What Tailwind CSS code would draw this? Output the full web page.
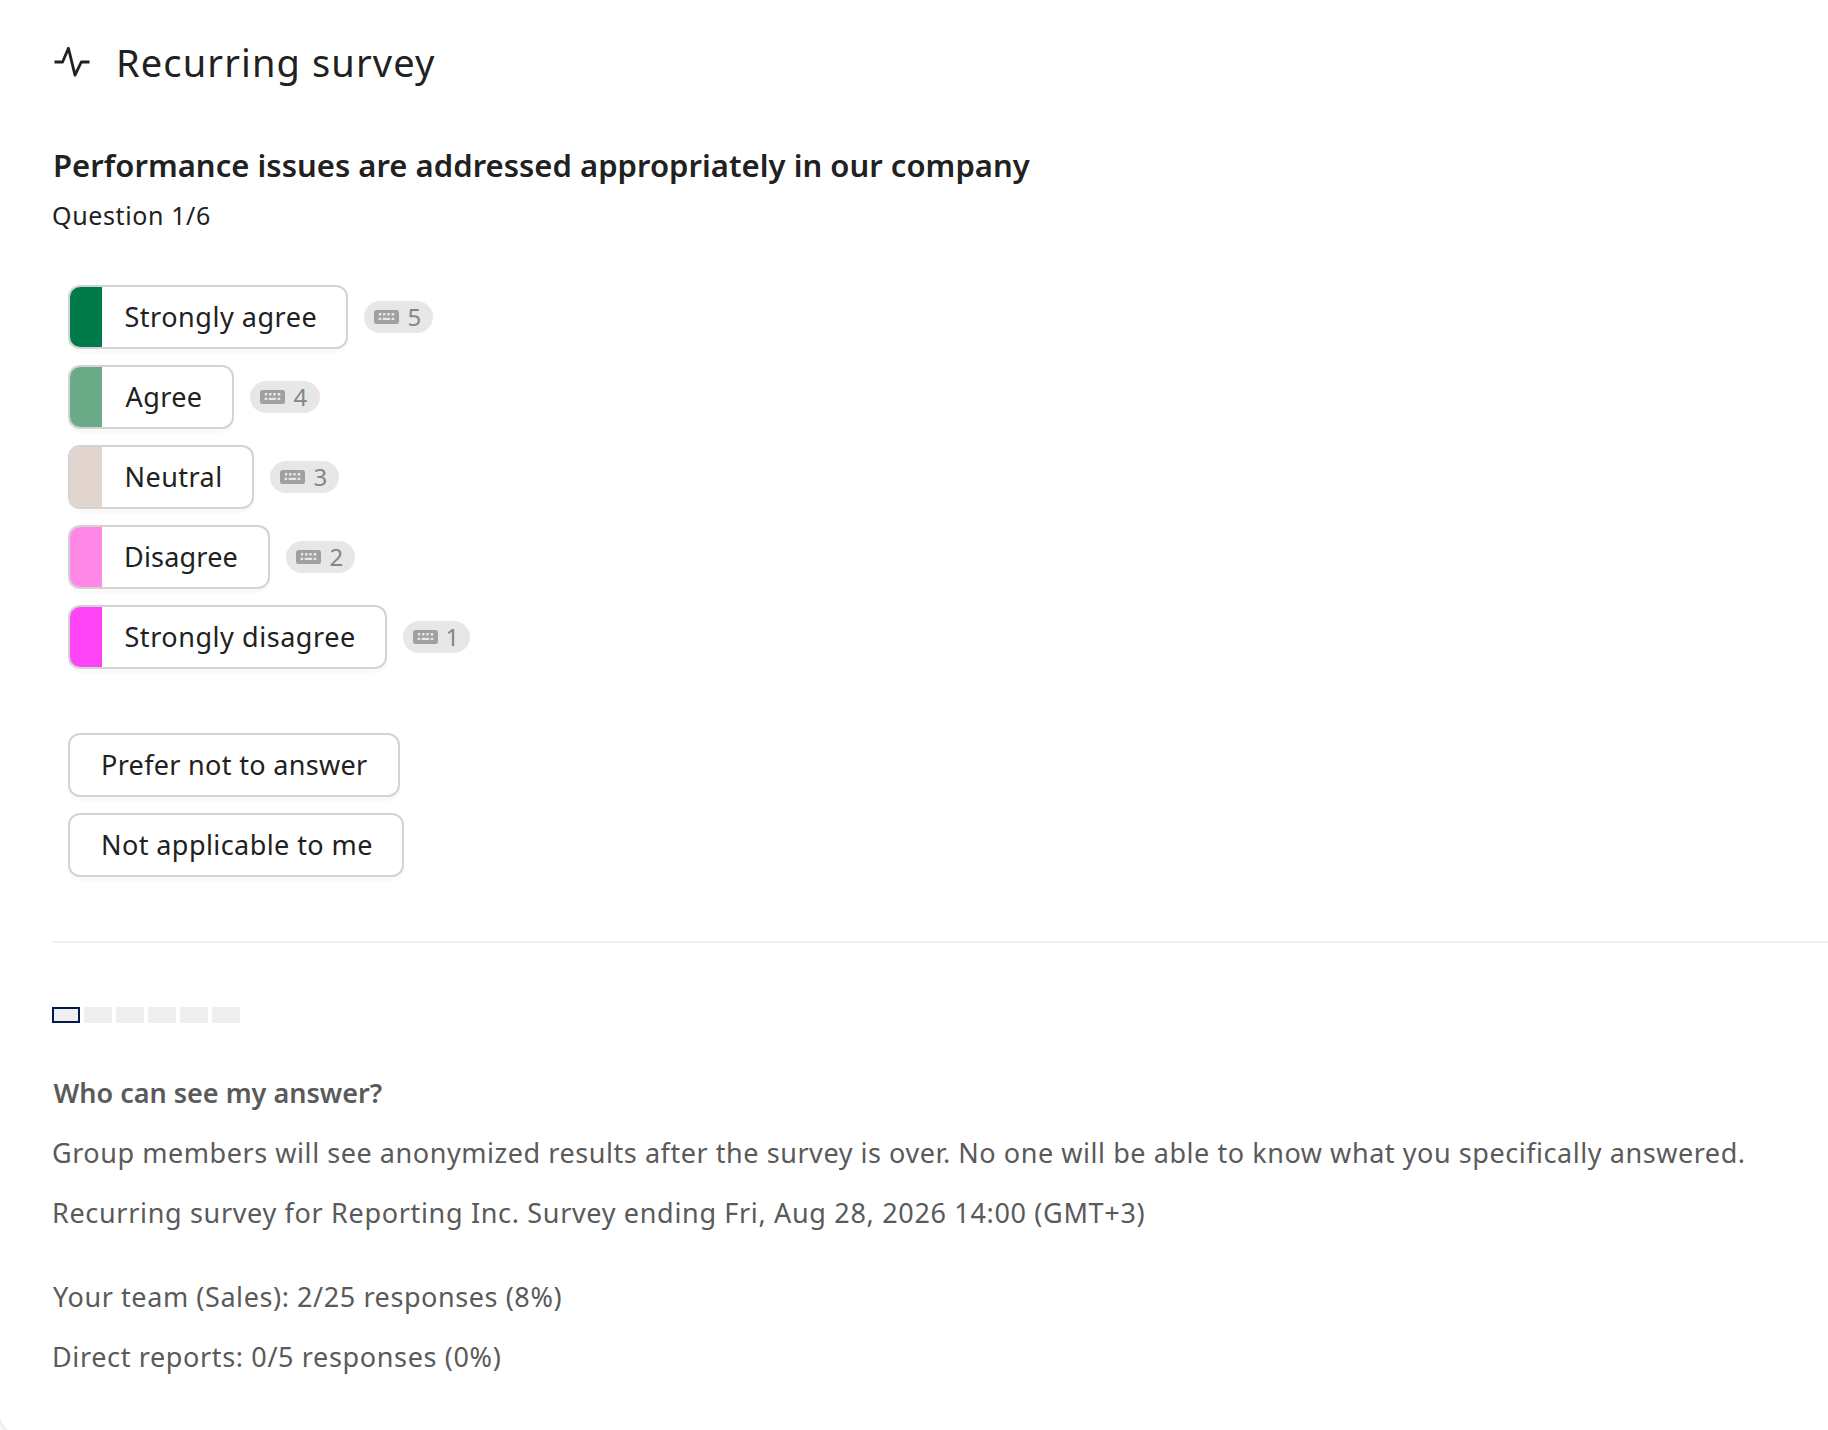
<!DOCTYPE html>
<html lang="en">
<head>
  <meta charset="UTF-8" />
  <meta name="viewport" content="width=device-width, initial-scale=1.0"/>
  <title>Recurring survey</title>
  <script src="https://cdn.jsdelivr.net/npm/@tailwindcss/browser@4"></script>
</head>

<body class="bg-[#faf7f5] text-[#212121] font-['Noto_Sans','Open_Sans',sans-serif] h-[1430px] overflow-hidden">

  <!-- keyboard icon, shared by all shortcut pills -->
  <svg class="hidden">
    <symbol id="keyboard" viewBox="0 0 25 14">
      <rect width="25" height="14" rx="2.5" fill="#a0a0a0"/>
      <path fill="#e7e7e7" d="M5 3h2.5l-.4 2.4H4.6zM9.2 3h2.5l-.4 2.4H8.8zM13.4 3h2.5l-.4 2.4H13zM17.8 3h2.5v2.4h-2.9zM4.6 7.8h2.6v2.3H4.6zM8.6 7.8h7.6v2.3H8.6zM17.6 7.8h2.7v2.3h-2.7z"/>
    </symbol>
  </svg>

  <main class="bg-white h-[1440px] -ml-1 pl-[54px] pt-[37px] border-l-2 border-b-2 border-[#ececec] rounded-bl-[32px]">

    <!-- HEADER -->
    <header class="flex items-center h-12">
      <svg class="ml-0.5 mt-px w-9 h-8" viewBox="0 0 36 32" fill="none" stroke="#212121" stroke-width="2.8" stroke-linejoin="round">
        <path d="M.5 16h8.1L14.4 2.2 21 29.2 27.3 16H35.5"/>
      </svg>
      <h1 class="ml-[26px] mt-px text-[38px] leading-12 tracking-[1.13px]">Recurring survey</h1>
    </header>

    <!-- QUESTION -->
    <h2 class="mt-15 ml-px text-[31px] leading-10 font-semibold tracking-[0.03px]">Performance issues are addressed appropriately in our company</h2>
    <p class="mt-3.5 text-[25px] leading-8 tracking-[0.62px]">Question 1/6</p>

    <!-- ANSWERS -->
    <div class="mt-[54px] ml-4 flex flex-col gap-4 text-[27px]">
      <div class="flex items-center gap-4">
        <button class="flex items-center w-[280px] h-16 border-2 border-[#d3d3d3] rounded-xl overflow-hidden shadow-[0_4px_0_rgba(0,0,0,0.02)]">
          <span class="w-8 h-full bg-[#007a4a]"></span>
          <span class="ml-[22.5px] tracking-[0.52px] whitespace-nowrap">Strongly agree</span>
        </button>
        <span class="flex items-center w-[69px] h-8 pl-[9.5px] rounded-full bg-[#e7e7e7] text-2xl text-[#858585]">
          <svg class="w-[25px] h-3.5"><use href="#keyboard"/></svg><span class="ml-[9px]">5</span>
        </span>
      </div>
      <div class="flex items-center gap-4">
        <button class="flex items-center w-[166px] h-16 border-2 border-[#d3d3d3] rounded-xl overflow-hidden shadow-[0_4px_0_rgba(0,0,0,0.02)]">
          <span class="w-8 h-full bg-[#6aaa86]"></span>
          <span class="ml-[23.5px] tracking-[0.4px] whitespace-nowrap">Agree</span>
        </button>
        <span class="flex items-center w-[70px] h-8 pl-[9.5px] rounded-full bg-[#e7e7e7] text-2xl text-[#858585]">
          <svg class="w-[25px] h-3.5"><use href="#keyboard"/></svg><span class="ml-[9px]">4</span>
        </span>
      </div>
      <div class="flex items-center gap-4">
        <button class="flex items-center w-[186px] h-16 border-2 border-[#d3d3d3] rounded-xl overflow-hidden shadow-[0_4px_0_rgba(0,0,0,0.02)]">
          <span class="w-8 h-full bg-[#e2d5d0]"></span>
          <span class="ml-[22.5px] tracking-[0.45px] whitespace-nowrap">Neutral</span>
        </button>
        <span class="flex items-center w-[69px] h-8 pl-[9.5px] rounded-full bg-[#e7e7e7] text-2xl text-[#858585]">
          <svg class="w-[25px] h-3.5"><use href="#keyboard"/></svg><span class="ml-[9px]">3</span>
        </span>
      </div>
      <div class="flex items-center gap-4">
        <button class="flex items-center w-[202px] h-16 border-2 border-[#d3d3d3] rounded-xl overflow-hidden shadow-[0_4px_0_rgba(0,0,0,0.02)]">
          <span class="w-8 h-full bg-[#ff87e5]"></span>
          <span class="ml-[22px] tracking-[0.2px] whitespace-nowrap">Disagree</span>
        </button>
        <span class="flex items-center w-[69px] h-8 pl-[9.5px] rounded-full bg-[#e7e7e7] text-2xl text-[#858585]">
          <svg class="w-[25px] h-3.5"><use href="#keyboard"/></svg><span class="ml-[9px]">2</span>
        </span>
      </div>
      <div class="flex items-center gap-4">
        <button class="flex items-center w-[319px] h-16 border-2 border-[#d3d3d3] rounded-xl overflow-hidden shadow-[0_4px_0_rgba(0,0,0,0.02)]">
          <span class="w-8 h-full bg-[#ff44f6]"></span>
          <span class="ml-[22.5px] tracking-[0.55px] whitespace-nowrap">Strongly disagree</span>
        </button>
        <span class="flex items-center w-[67px] h-8 pl-[9.5px] rounded-full bg-[#e7e7e7] text-2xl text-[#858585]">
          <svg class="w-[25px] h-3.5"><use href="#keyboard"/></svg><span class="ml-2">1</span>
        </span>
      </div>
    </div>

    <div class="mt-16 ml-4 flex flex-col gap-4 text-[27px]">
      <button class="w-[332px] h-16 pl-[31px] text-left border-2 border-[#d3d3d3] rounded-xl tracking-[0.32px] whitespace-nowrap shadow-[0_4px_0_rgba(0,0,0,0.02)]">Prefer not to answer</button>
      <button class="w-[336px] h-16 pl-[31px] text-left border-2 border-[#d3d3d3] rounded-xl tracking-[0.42px] whitespace-nowrap shadow-[0_4px_0_rgba(0,0,0,0.02)]">Not applicable to me</button>
    </div>

    <hr class="mt-16 border-t-2 border-[#efefef]" />

    <!-- PROGRESS -->
    <div class="mt-16 flex gap-1">
      <span class="w-7 h-4 bg-[#efefef] border-2 border-[#001a4d]"></span>
      <span class="w-7 h-4 bg-[#efefef]"></span>
      <span class="w-7 h-4 bg-[#efefef]"></span>
      <span class="w-7 h-4 bg-[#efefef]"></span>
      <span class="w-7 h-4 bg-[#efefef]"></span>
      <span class="w-7 h-4 bg-[#efefef]"></span>
    </div>

    <!-- PRIVACY INFO -->
    <div class="mt-[52px] flex flex-col gap-6 text-[27px] leading-9 text-[#5a5a5a] whitespace-nowrap">
      <h3 class="ml-[1.5px] font-semibold">Who can see my answer?</h3>
      <p class="tracking-[0.554px]">Group members will see anonymized results after the survey is over. No one will be able to know what you specifically answered.</p>
      <p class="tracking-[0.67px]">Recurring survey for Reporting Inc. Survey ending Fri, Aug 28, 2026 14:00 (GMT+3)</p>
    </div>
    <div class="mt-12 flex flex-col gap-6 text-[27px] leading-9 text-[#5a5a5a] whitespace-nowrap">
      <p class="ml-px tracking-[0.58px]">Your team (Sales): 2/25 responses (8%)</p>
      <p class="tracking-[0.64px]">Direct reports: 0/5 responses (0%)</p>
    </div>
  </main>

</body>
</html>
